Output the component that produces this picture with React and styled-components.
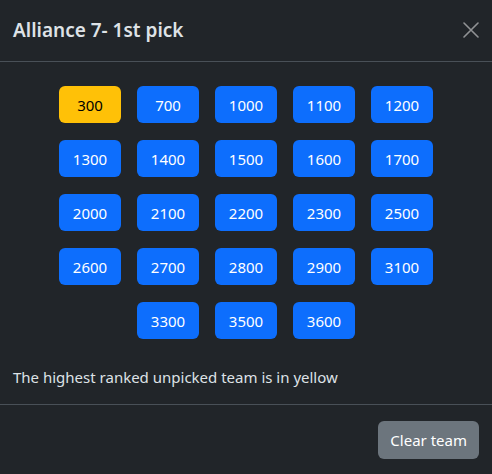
import React from "react";
import styled, { createGlobalStyle } from "styled-components";

const GlobalStyle = createGlobalStyle`
  html, body {
    margin: 0;
    padding: 0;
    background: #212529;
  }
  body {
    font-family: "Noto Sans", "Open Sans", sans-serif;
    color: #dee2e6;
  }
`;

const Modal = styled.div`
  width: 492px;
  height: 474px;
  background: #212529;
  display: flex;
  flex-direction: column;
`;

const Header = styled.div`
  display: flex;
  align-items: center;
  justify-content: space-between;
  padding: 15px 13px 16px 13px;
  border-bottom: 1px solid #495057;
`;

const Title = styled.h5`
  margin: 0;
  font-size: 19px;
  font-weight: 600;
  line-height: 30px;
  color: #dee2e6;
`;

const CloseButton = styled.button`
  background: none;
  border: none;
  padding: 0;
  width: 16px;
  height: 16px;
  cursor: pointer;
  opacity: 0.5;
  display: flex;
  align-items: center;
  justify-content: center;
`;

const Body = styled.div`
  padding: 24px 13px 15px 13px;
  border-bottom: 1px solid #495057;
`;

const Grid = styled.div`
  width: 374px;
  margin: 0 auto 26px auto;
  display: flex;
  flex-wrap: wrap;
  justify-content: center;
  gap: 17px 16px;
`;

const TeamButton = styled.button`
  width: 62px;
  height: 37px;
  border: none;
  border-radius: 6px;
  font-family: inherit;
  font-size: 15px;
  background: ${(p) => (p.$highlight ? "#ffc107" : "#0d6efd")};
  color: ${(p) => (p.$highlight ? "#000" : "#fff")};
  cursor: pointer;
`;

const Note = styled.p`
  margin: 0;
  font-size: 15px;
  line-height: 24px;
`;

const Footer = styled.div`
  display: flex;
  justify-content: flex-end;
  padding: 16px 13px;
`;

const SecondaryButton = styled.button`
  height: 38px;
  padding: 0 12px;
  border: none;
  border-radius: 6px;
  background: #6c757d;
  color: #fff;
  font-family: inherit;
  font-size: 15px;
  cursor: pointer;
`;

const teams = [
  300, 700, 1000, 1100, 1200, 1300, 1400, 1500, 1600, 1700, 2000, 2100, 2200,
  2300, 2500, 2600, 2700, 2800, 2900, 3100, 3300, 3500, 3600,
];

export default function App() {
  return (
    <Modal>
      <GlobalStyle />
      <Header>
        <Title>Alliance 7- 1st pick</Title>
        <CloseButton aria-label="Close">
          <svg width="16" height="16" viewBox="0 0 16 16">
            <path
              d="M1 1L15 15M15 1L1 15"
              stroke="#fff"
              strokeWidth="1.6"
              strokeLinecap="round"
            />
          </svg>
        </CloseButton>
      </Header>
      <Body>
        <Grid>
          {teams.map((t, i) => (
            <TeamButton key={t} $highlight={i === 0}>
              {t}
            </TeamButton>
          ))}
        </Grid>
        <Note>The highest ranked unpicked team is in yellow</Note>
      </Body>
      <Footer>
        <SecondaryButton>Clear team</SecondaryButton>
      </Footer>
    </Modal>
  );
}
